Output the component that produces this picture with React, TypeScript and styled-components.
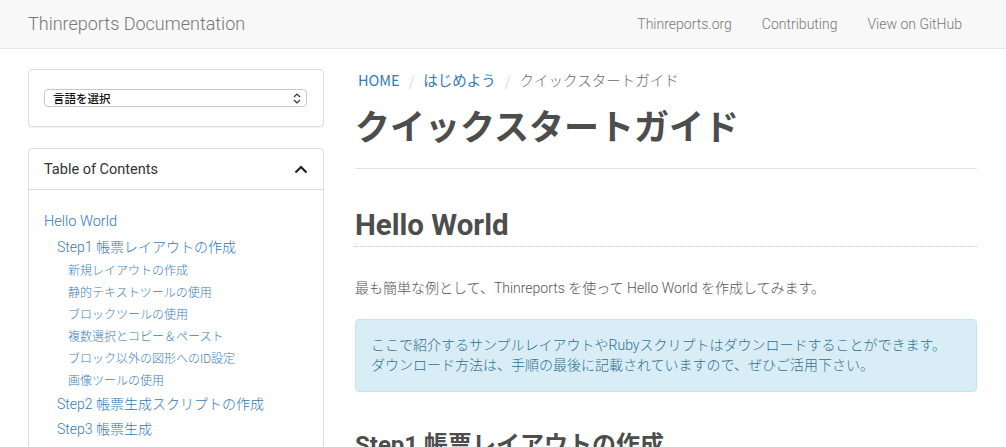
import React from "react";
import styled, { createGlobalStyle } from "styled-components";

const Global = createGlobalStyle`
  html, body { margin: 0; padding: 0; background: #fff; }
  body {
    font-family: Roboto, "Noto Sans CJK JP", sans-serif;
    color: #555;
    font-size: 14px;
  }
  * { box-sizing: border-box; }
`;

const Navbar = styled.header`
  height: 49px;
  background: #f8f8f8;
  border-bottom: 1px solid #e7e7e7;
  display: flex;
  align-items: center;
  justify-content: space-between;
  padding: 0 29px 0 28px;
`;

const Brand = styled.a`
  font-size: 18px;
  color: #777;
  font-weight: 300;
  text-decoration: none;
  margin-top: -2px;
`;

const NavLinks = styled.nav`
  display: flex;
`;

const NavLink = styled.a`
  font-size: 14px;
  color: #777;
  padding: 0 15px;
  text-decoration: none;
  font-weight: 300;
  margin-top: -1px;
`;

const Body = styled.div`
  display: flex;
  gap: 31px;
  padding: 20px 29px 0 28px;
`;

const Sidebar = styled.aside`
  width: 296px;
  flex: none;
  display: flex;
  flex-direction: column;
  gap: 21px;
`;

const Panel = styled.div`
  border: 1px solid #ddd;
  border-radius: 4px;
  background: #fff;
  box-shadow: 0 1px 1px rgba(0, 0, 0, 0.05);
`;

const PanelBody = styled.div<{ $pad: string }>`
  padding: ${(p) => p.$pad};
`;

const SelectBox = styled.div`
  height: 18px;
  border: 1px solid #c8c8c8;
  border-radius: 4px;
  display: flex;
  align-items: center;
  justify-content: space-between;
  padding: 0 5px 0 8px;
  font-size: 11.5px;
  color: #111;
  font-family: "Noto Sans CJK JP", sans-serif;
  font-weight: 500;
`;

const PanelHeading = styled.div`
  height: 41px;
  border-bottom: 1px solid #ddd;
  display: flex;
  align-items: center;
  justify-content: space-between;
  padding: 0 15px;
  font-size: 14.5px;
  color: #333;
`;

const TocList = styled.ul`
  list-style: none;
  margin: 0;
  padding: 0;
`;

const TocItem = styled.li<{ $level: number }>`
  padding-left: ${(p) => (p.$level === 0 ? 0 : p.$level === 1 ? 13 : 24)}px;
  font-size: ${(p) => (p.$level === 2 ? 12 : p.$level === 1 ? 14 : 14.5)}px;
  height: ${(p) => (p.$level === 2 ? 22 : p.$level === 1 ? 25 : 26)}px;
  line-height: ${(p) => (p.$level === 2 ? 22 : p.$level === 1 ? 25 : 26)}px;
  color: ${(p) => (p.$level === 2 ? "#3a80bd" : "#337ab7")};
  font-weight: 300;
  white-space: nowrap;
`;

const Main = styled.main`
  flex: 1;
  min-width: 0;
`;

const Breadcrumb = styled.ol`
  list-style: none;
  margin: 0;
  padding: 0 0 0 3px;
  display: flex;
  align-items: center;
  height: 20px;
  font-size: 14.5px;
  font-family: "Noto Sans CJK JP", sans-serif;
  font-weight: 300;
`;

const Crumb = styled.li<{ $active?: boolean }>`
  color: ${(p) => (p.$active ? "#666" : "#337ab7")};
  font-weight: ${(p) => (p.$active ? 300 : 400)};
`;

const Sep = styled.span`
  color: #ccc;
  padding: 0 9px;
`;

const Title = styled.h1`
  margin: 12px 0 0;
  font-size: 35px;
  line-height: 48px;
  font-weight: 700;
  color: #4d4d4d;
  font-family: "Noto Sans CJK JP", sans-serif;
  padding-bottom: 19px;
  border-bottom: 1px solid #e3e3e3;
`;

const H2 = styled.h2`
  margin: 38px 0 0;
  font-size: 29.5px;
  font-weight: 700;
  line-height: 36px;
  color: #4d4d4d;
  padding-bottom: 3px;
  border-bottom: 1px dotted #c8c8c8;
`;

const Para = styled.p`
  margin: 31px 0 0;
  font-size: 14px;
  line-height: 20px;
  font-weight: 300;
  color: #555;
`;

const Alert = styled.div`
  margin-top: 21px;
  background: #d9edf7;
  border: 1px solid #bce8f1;
  border-radius: 4px;
  padding: 15px 15px 16px;
  color: #31708f;
  font-size: 14px;
  line-height: 20px;
  font-weight: 300;
`;

const H3 = styled.h3`
  margin: 38px 0 0;
  font-size: 24px;
  font-weight: 700;
  color: #4d4d4d;
  line-height: 30px;
`;

const toc: [number, string][] = [
  [0, "Hello World"],
  [1, "Step1 帳票レイアウトの作成"],
  [2, "新規レイアウトの作成"],
  [2, "静的テキストツールの使用"],
  [2, "ブロックツールの使用"],
  [2, "複数選択とコピー＆ペースト"],
  [2, "ブロック以外の図形へのID設定"],
  [2, "画像ツールの使用"],
  [1, "Step2 帳票生成スクリプトの作成"],
  [1, "Step3 帳票生成"],
];

export default function App() {
  return (
    <>
      <Global />
      <Navbar>
        <Brand>Thinreports Documentation</Brand>
        <NavLinks>
          <NavLink>Thinreports.org</NavLink>
          <NavLink>Contributing</NavLink>
          <NavLink>View on GitHub</NavLink>
        </NavLinks>
      </Navbar>
      <Body>
        <Sidebar>
          <Panel>
            <PanelBody $pad="19px 16px 19px 15px">
              <SelectBox>
                <span>言語を選択</span>
                <svg width="8" height="11" viewBox="0 0 8 11">
                  <path d="M1 4 L4 1 L7 4 M1 7 L4 10 L7 7" fill="none" stroke="#333" strokeWidth="1.2" />
                </svg>
              </SelectBox>
            </PanelBody>
          </Panel>
          <Panel>
            <PanelHeading>
              <span>Table of Contents</span>
              <svg width="14" height="9" viewBox="0 0 14 9">
                <path d="M1.5 7.5 L7 2 L12.5 7.5" fill="none" stroke="#222" strokeWidth="2.2" />
              </svg>
            </PanelHeading>
            <PanelBody $pad="19px 15px 15px">
              <TocList>
                {toc.map(([lvl, t], i) => (
                  <TocItem key={i} $level={lvl}>
                    {t}
                  </TocItem>
                ))}
              </TocList>
            </PanelBody>
          </Panel>
        </Sidebar>
        <Main>
          <Breadcrumb>
            <Crumb>HOME</Crumb>
            <Sep>/</Sep>
            <Crumb>はじめよう</Crumb>
            <Sep>/</Sep>
            <Crumb $active>クイックスタートガイド</Crumb>
          </Breadcrumb>
          <Title>クイックスタートガイド</Title>
          <H2>Hello World</H2>
          <Para>最も簡単な例として、Thinreports を使って Hello World を作成してみます。</Para>
          <Alert>
            ここで紹介するサンプルレイアウトやRubyスクリプトはダウンロードすることができます。
            <br />
            ダウンロード方法は、手順の最後に記載されていますので、ぜひご活用下さい。
          </Alert>
          <H3>Step1 帳票レイアウトの作成</H3>
        </Main>
      </Body>
    </>
  );
}
